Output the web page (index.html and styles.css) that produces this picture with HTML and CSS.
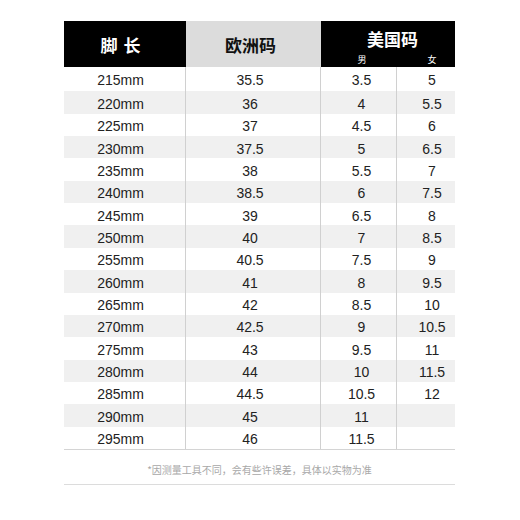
FILE: index.html
```html
<!DOCTYPE html>
<html lang="zh-CN">
<head>
<meta charset="utf-8">
<link rel="stylesheet" href="styles.css">
</head>
<body>
<div class="sheet">
  <div class="head">
    <div class="h h1">脚 长</div>
    <div class="h h2">欧洲码</div>
    <div class="h h3">
      <div class="h3-title">美国码</div>
      <div class="h3-sub"><span class="sub-m">男</span><span class="sub-f">女</span></div>
    </div>
  </div>
  <div class="body">
    <div class="row"><div class="c c1">215mm</div><div class="c c2">35.5</div><div class="c c3">3.5</div><div class="c c4">5</div></div>
    <div class="row"><div class="c c1">220mm</div><div class="c c2">36</div><div class="c c3">4</div><div class="c c4">5.5</div></div>
    <div class="row"><div class="c c1">225mm</div><div class="c c2">37</div><div class="c c3">4.5</div><div class="c c4">6</div></div>
    <div class="row"><div class="c c1">230mm</div><div class="c c2">37.5</div><div class="c c3">5</div><div class="c c4">6.5</div></div>
    <div class="row"><div class="c c1">235mm</div><div class="c c2">38</div><div class="c c3">5.5</div><div class="c c4">7</div></div>
    <div class="row"><div class="c c1">240mm</div><div class="c c2">38.5</div><div class="c c3">6</div><div class="c c4">7.5</div></div>
    <div class="row"><div class="c c1">245mm</div><div class="c c2">39</div><div class="c c3">6.5</div><div class="c c4">8</div></div>
    <div class="row"><div class="c c1">250mm</div><div class="c c2">40</div><div class="c c3">7</div><div class="c c4">8.5</div></div>
    <div class="row"><div class="c c1">255mm</div><div class="c c2">40.5</div><div class="c c3">7.5</div><div class="c c4">9</div></div>
    <div class="row"><div class="c c1">260mm</div><div class="c c2">41</div><div class="c c3">8</div><div class="c c4">9.5</div></div>
    <div class="row"><div class="c c1">265mm</div><div class="c c2">42</div><div class="c c3">8.5</div><div class="c c4">10</div></div>
    <div class="row"><div class="c c1">270mm</div><div class="c c2">42.5</div><div class="c c3">9</div><div class="c c4">10.5</div></div>
    <div class="row"><div class="c c1">275mm</div><div class="c c2">43</div><div class="c c3">9.5</div><div class="c c4">11</div></div>
    <div class="row"><div class="c c1">280mm</div><div class="c c2">44</div><div class="c c3">10</div><div class="c c4">11.5</div></div>
    <div class="row"><div class="c c1">285mm</div><div class="c c2">44.5</div><div class="c c3">10.5</div><div class="c c4">12</div></div>
    <div class="row"><div class="c c1">290mm</div><div class="c c2">45</div><div class="c c3">11</div><div class="c c4"></div></div>
    <div class="row"><div class="c c1">295mm</div><div class="c c2">46</div><div class="c c3">11.5</div><div class="c c4"></div></div>
  </div>
  <div class="note">*因测量工具不同，会有些许误差，具体以实物为准</div>
</div>
</body>
</html>
```
FILE: styles.css
```css
html, body {
  margin: 0;
  padding: 0;
  background: #ffffff;
}
body {
  font-family: "Liberation Sans", Arial, "Noto Sans CJK SC", sans-serif;
}
.sheet {
  width: 391px;
  margin: 21px 0 0 64px;
}
.head {
  display: flex;
  height: 46px;
}
.h {
  font-family: "Noto Sans CJK SC", sans-serif;
  font-weight: 700;
  font-size: 17px;
  display: flex;
  align-items: center;
  justify-content: center;
}
.h1 {
  width: 122px;
  background: #000;
  color: #fff;
  padding-right: 8px;
  box-sizing: border-box;
  letter-spacing: 1px;
}
.h2 {
  width: 135px;
  background: #dcdcdc;
  color: #111;
  padding-right: 6px;
  box-sizing: border-box;
}
.h3 {
  width: 134px;
  background: #000;
  color: #fff;
  flex-direction: column;
  justify-content: flex-start;
}
.h3-title {
  line-height: 20px;
  margin-top: 8px;
  padding-left: 9px;
}
.h3-sub {
  display: flex;
  width: 100%;
  font-size: 9px;
  font-weight: 400;
  line-height: 12px;
  margin-top: 5px;
}
.sub-m {
  width: 76px;
  text-align: center;
  padding-left: 6px;
  box-sizing: border-box;
}
.sub-f {
  width: 58px;
  text-align: center;
  padding-left: 12px;
  box-sizing: border-box;
}
.body {
  border-bottom: 1px solid #d4d4d4;
}
.row {
  display: flex;
  height: 22.36px;
}
.row:first-child {
  height: 24.3px;
}
.row:nth-child(even) {
  background: #f0f0f0;
}
.c {
  box-sizing: border-box;
  font-size: 14px;
  color: #222;
  text-align: center;
  line-height: 22.36px;
  padding-top: 1.5px;
}
.row:first-child .c {
  line-height: 24.3px;
  padding-top: 1px;
}
.c1 { width: 122px; border-right: 1px solid #d0d0d0; padding-right: 8px; }
.c2 { width: 135px; border-right: 1px solid #d0d0d0; padding-right: 6px; }
.c3 { width: 76px; border-right: 1px solid #d0d0d0; padding-left: 6px; }
.c4 { width: 58px; padding-left: 12px; }
.note {
  height: 35px;
  box-sizing: border-box;
  padding-top: 14px;
  font-family: "Noto Sans CJK SC", sans-serif;
  font-size: 10px;
  line-height: 12px;
  color: #a8a8a8;
  text-align: center;
  border-bottom: 1px solid #dcdcdc;
}
```
